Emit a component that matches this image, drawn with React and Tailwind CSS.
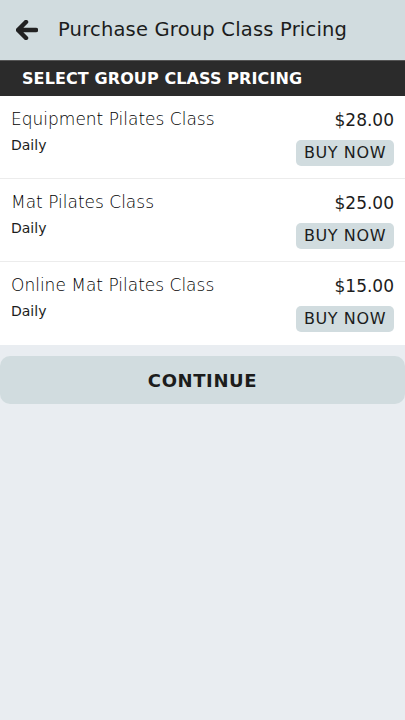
import React from "react";

const items = [
  { name: "Equipment Pilates Class", price: "$28.00" },
  { name: "Mat Pilates Class", price: "$25.00" },
  { name: "Online Mat Pilates Class", price: "$15.00" },
];

export default function App() {
  return (
    <div
      className="w-[405px] h-[720px] bg-[#e9edf1] flex flex-col text-[#1c1c1c]"
      style={{ fontFamily: '"DejaVu Sans", "Noto Sans", sans-serif' }}
    >
      <div className="h-[60px] bg-[#d1dcdf] flex items-center">
        <div className="w-[58px] flex items-center pl-[16px]">
          <svg width="22" height="20" viewBox="0 0 22 20">
            <path d="M10 2 L2 10 L10 18 M3 10 H20" stroke="#222" strokeWidth="4.5" fill="none" strokeLinecap="round" strokeLinejoin="round" />
          </svg>
        </div>
        <div className="text-[19.5px] tracking-[0.2px] text-[#1c1c1c]">Purchase Group Class Pricing</div>
      </div>
      <div className="h-[36px] bg-[#2b2b2b] border-t border-[#555] flex items-center pl-[22px]">
        <div className="text-white font-bold text-[16px] tracking-[0.1px]">SELECT GROUP CLASS PRICING</div>
      </div>
      <div className="bg-white">
        {items.map((it, i) => (
          <div
            key={i}
            className={`h-[83px] flex justify-between px-[11px] pt-[12px] ${i < 2 ? "border-b border-[#ececec]" : ""}`}
          >
            <div className="flex flex-col">
              <div className="text-[17px] font-light leading-[22px] text-[#000]">{it.name}</div>
              <div className="text-[14px] leading-[18px] mt-[6px]">Daily</div>
            </div>
            <div className="flex flex-col items-end">
              <div className="text-[17px] leading-[22px] mt-[1px]">{it.price}</div>
              <div className="mt-[9px] h-[26px] w-[98px] bg-[#d1dcdf] rounded-[5px] flex items-center justify-center text-[16px] tracking-[0.6px]">
                BUY NOW
              </div>
            </div>
          </div>
        ))}
      </div>
      <div className="mt-[11px] h-[48px] bg-[#d1dcdf] rounded-[10px] flex items-center justify-center text-[18px] font-semibold tracking-[0.6px]">
        CONTINUE
      </div>
    </div>
  );
}
